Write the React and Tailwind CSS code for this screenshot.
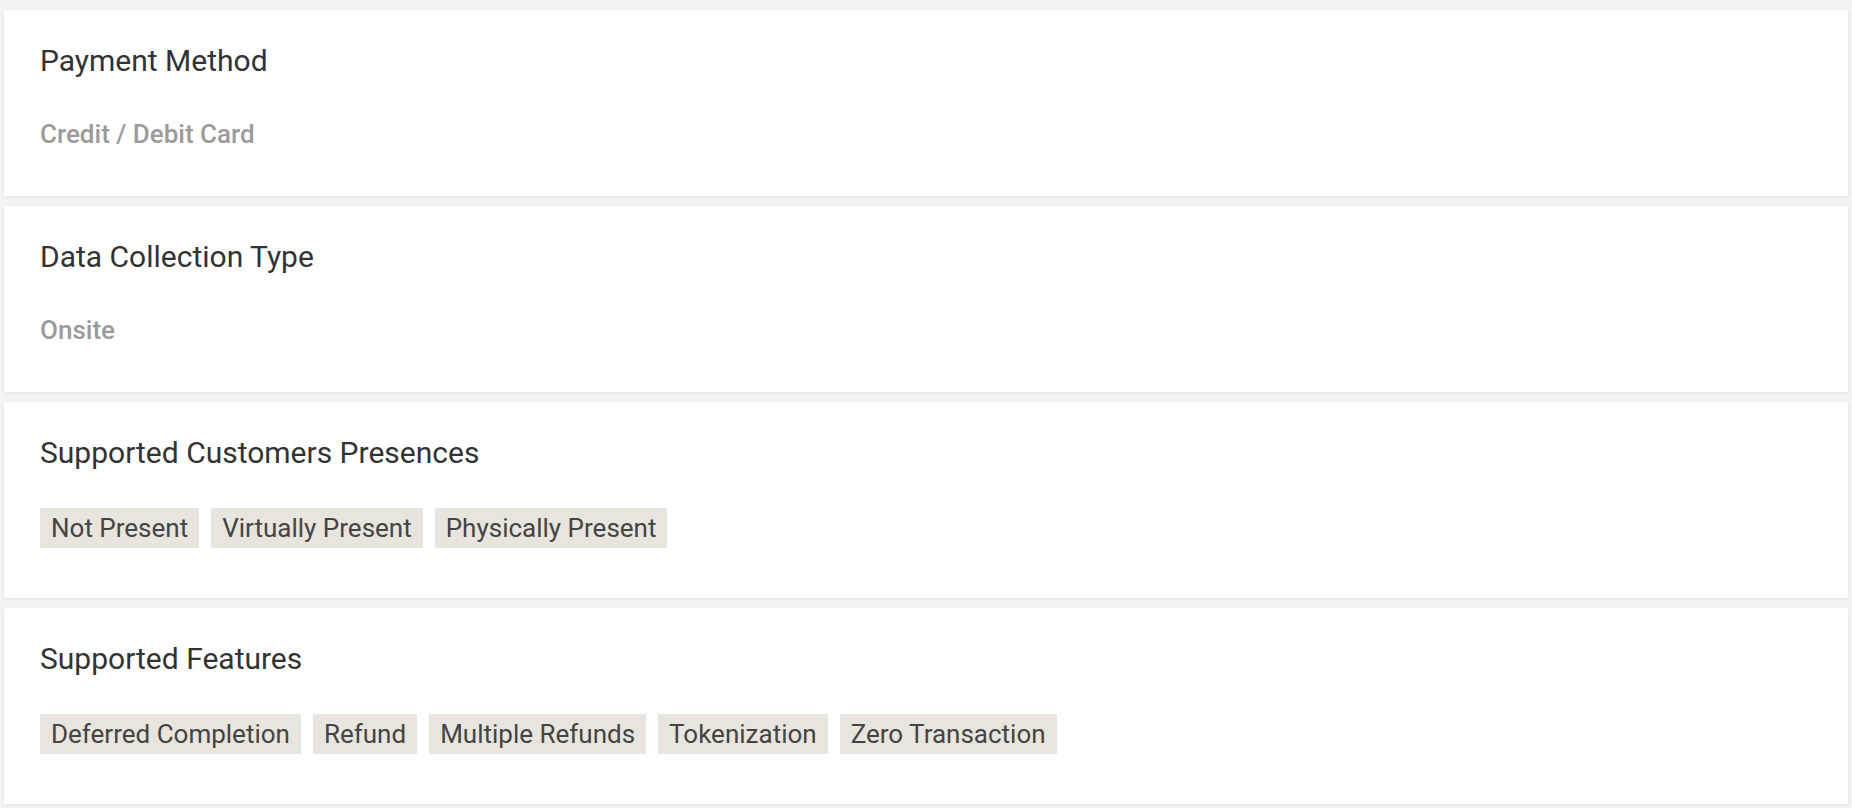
export default function App() {
  const font = { fontFamily: "Roboto, 'Noto Sans', sans-serif" };
  const Card = ({ title, children }) => (
    <div className="bg-white mx-[4px] px-[36px] pt-[33px] shadow-[0_1px_3px_rgba(0,0,0,0.08)]">
      <div className="text-[30px] leading-[36px] text-[#333333]">{title}</div>
      {children}
    </div>
  );
  const Tags = ({ items }) => (
    <div className="flex flex-wrap gap-[12px] mt-[37px] pb-[50px]">
      {items.map((t) => (
        <span
          key={t}
          className="bg-[#e8e4de] text-[#444444] text-[26px] leading-[40px] h-[40px] px-[11px]"
        >
          {t}
        </span>
      ))}
    </div>
  );
  return (
    <div className="min-h-[808px] bg-[#f3f3f3] pt-[10px] pb-[4px] flex flex-col gap-[10px]" style={font}>
      <Card title="Payment Method">
        <div className="mt-[39px] pb-[46px] text-[26px] leading-[32px] font-medium text-[#9b9b9b]">
          Credit / Debit Card
        </div>
      </Card>
      <Card title="Data Collection Type">
        <div className="mt-[39px] pb-[46px] text-[26px] leading-[32px] font-medium text-[#9b9b9b]">
          Onsite
        </div>
      </Card>
      <Card title="Supported Customers Presences">
        <Tags items={["Not Present", "Virtually Present", "Physically Present"]} />
      </Card>
      <Card title="Supported Features">
        <Tags
          items={[
            "Deferred Completion",
            "Refund",
            "Multiple Refunds",
            "Tokenization",
            "Zero Transaction",
          ]}
        />
      </Card>
    </div>
  );
}
